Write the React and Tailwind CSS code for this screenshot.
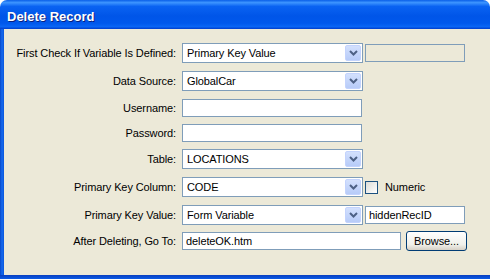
import React from 'react';

const font = { fontFamily: '"Liberation Sans", Arial, sans-serif' };

const Chevron = () => (
    <svg width="9" height="6" viewBox="0 0 9 6" className="block">
        <path d="M1 1 L4.5 4.5 L8 1" fill="none" stroke="#4d6185" strokeWidth="2" />
    </svg>
);

const Select = ({ value, width = 'w-[181px]' }) => (
    <div className={`${width} h-[20px] border border-[#7f9db9] bg-white flex items-stretch p-[1px]`}>
        <div className="flex-1 flex items-center pl-[3px] text-[11px] tracking-[-0.1px] text-black">{value}</div>
        <div className="w-[16px] flex items-center justify-center rounded-[2px] bg-[linear-gradient(to_bottom,#d3e0fd,#b7cbf8)] border border-[#c3d3fd]">
            <Chevron />
        </div>
    </div>
);

const TextBox = ({ value = '', width = 'w-[180px]', disabled = false }) => (
    <div className={`${width} h-[18px] border border-[#7f9db9] ${disabled ? 'bg-[#ece9d8]' : 'bg-white'} flex items-center pl-[3px] text-[11px] tracking-[-0.1px] text-black`}>
        {value}
    </div>
);

const Row = ({ label, children, className = '' }) => (
    <div className={`flex items-center ${className}`}>
        <div className="w-[178px] pr-[6px] text-right text-[11px] tracking-[-0.1px] text-black whitespace-nowrap">{label}</div>
        <div className="flex items-center">{children}</div>
    </div>
);

export default function App() {
    return (
        <div className="w-[490px] h-[279px] overflow-hidden flex flex-col select-none" style={font}>
            {/* title bar */}
            <div className="h-[29px] shrink-0 rounded-t-[7px] bg-[linear-gradient(to_bottom,#0a5fe8_0%,#3d95ff_9%,#0a63f2_22%,#0055e8_55%,#0058ec_80%,#0a66f5_92%,#003dcc_100%)] flex items-center pl-[7px] pt-[4px]">
                <span className="text-white font-bold text-[13px] [text-shadow:1px_1px_0_#0a1f7d]">Delete Record</span>
            </div>
            <div className="flex-1 flex min-h-0">
                <div className="w-[4px] bg-[linear-gradient(to_right,#0847c8,#166aee_50%,#0a56dc)]" />
                <div className="flex-1 bg-[#ece9d8] pt-[14px] flex flex-col">
                    <Row label="First Check If Variable Is Defined:">
                        <Select value="Primary Key Value" />
                        <div className="ml-[2px]"><TextBox width="w-[100px]" disabled /></div>
                    </Row>
                    <Row label="Data Source:" className="mt-[8px]">
                        <Select value="GlobalCar" />
                    </Row>
                    <Row label="Username:" className="mt-[8px]">
                        <TextBox />
                    </Row>
                    <Row label="Password:" className="mt-[7px]">
                        <TextBox />
                    </Row>
                    <Row label="Table:" className="mt-[7px]">
                        <Select value="LOCATIONS" />
                    </Row>
                    <Row label="Primary Key Column:" className="mt-[8px]">
                        <Select value="CODE" />
                        <div className="ml-[2px] w-[13px] h-[13px] border border-[#1c5180] bg-[linear-gradient(135deg,#dcdcd7,#ffffff)]" />
                        <span className="ml-[7px] text-[11px] tracking-[-0.1px] text-black">Numeric</span>
                    </Row>
                    <Row label="Primary Key Value:" className="mt-[8px]">
                        <Select value="Form Variable" />
                        <div className="ml-[2px]"><TextBox value="hiddenRecID" width="w-[100px]" /></div>
                    </Row>
                    <Row label="After Deleting, Go To:" className="mt-[6px]">
                        <TextBox value="deleteOK.htm" width="w-[219px]" />
                        <button className="ml-[5px] w-[61px] h-[20px] rounded-[3px] border border-[#003c74] bg-[linear-gradient(to_bottom,#ffffff,#f0f0ea_70%,#d6d0c5)] text-[11px] tracking-[-0.1px] text-black flex items-center justify-center">
                            Browse...
                        </button>
                    </Row>
                </div>
            </div>
            <div className="h-[4px] shrink-0 bg-[linear-gradient(to_bottom,#0a3fbf,#0a5ae6)]" />
        </div>
    );
}
